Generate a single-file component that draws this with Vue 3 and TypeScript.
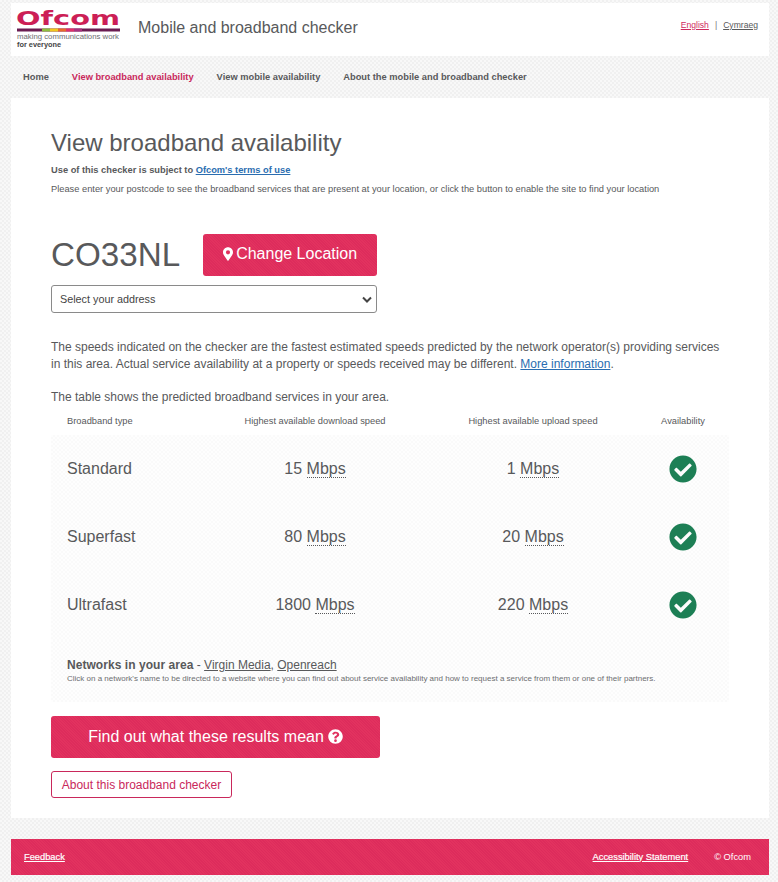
<script setup lang="ts">
const navItems = [
  { label: 'Home', active: false },
  { label: 'View broadband availability', active: true },
  { label: 'View mobile availability', active: false },
  { label: 'About the mobile and broadband checker', active: false },
]
const rows = [
  { type: 'Standard', down: '15', up: '1' },
  { type: 'Superfast', down: '80', up: '20' },
  { type: 'Ultrafast', down: '1800', up: '220' },
]
</script>

<template>
  <div class="page">
    <header class="header">
      <div class="brand">
        <svg class="logo" width="106" height="46" viewBox="0 0 106 46">
          <text class="logo-word" x="0" y="19" textLength="104" lengthAdjust="spacingAndGlyphs">Ofcom</text>
          <rect x="1" y="22.5" width="103" height="3" fill="#6b1d52" />
          <rect x="26" y="22.5" width="8" height="3" fill="#8fbf3f" />
          <rect x="34" y="22.5" width="8" height="3" fill="#f2c81e" />
          <rect x="42" y="22.5" width="8" height="3" fill="#e86a2c" />
          <rect x="50" y="22.5" width="8" height="3" fill="#e0306a" />
          <rect x="58" y="22.5" width="8" height="3" fill="#a8327f" />
          <text class="logo-tag" x="1" y="33" textLength="102" lengthAdjust="spacingAndGlyphs">making communications work</text>
          <text class="logo-for" x="1" y="41" textLength="44" lengthAdjust="spacingAndGlyphs">for everyone</text>
        </svg>
        <div class="site-title">Mobile and broadband checker</div>
      </div>
      <div class="lang">
        <a class="lang-active" href="#">English</a>
        <span class="lang-sep">|</span>
        <a href="#">Cymraeg</a>
      </div>
    </header>

    <nav class="nav">
      <a v-for="item in navItems" :key="item.label" href="#" :class="{ active: item.active }">{{ item.label }}</a>
    </nav>

    <main class="main">
      <h1>View broadband availability</h1>
      <p class="terms">Use of this checker is subject to <a href="#">Ofcom's terms of use</a></p>
      <p class="intro">Please enter your postcode to see the broadband services that are present at your location, or click the button to enable the site to find your location</p>

      <div class="location">
        <span class="postcode">CO33NL</span>
        <button class="change">
          <svg width="10" height="14" viewBox="0 0 384 512"><path fill="#fff" d="M172 502C27 291 0 269 0 192 0 86 86 0 192 0s192 86 192 192c0 77-27 99-172 310-9 14-31 14-40 0zm20-230a80 80 0 1 0 0-160 80 80 0 0 0 0 160z"/></svg>
          Change Location
        </button>
      </div>
      <div class="select">
        <span>Select your address</span>
        <svg width="10" height="7" viewBox="0 0 10 7"><path d="M1 1.5l4 4 4-4" fill="none" stroke="#444" stroke-width="2"/></svg>
      </div>

      <p class="body-text">The speeds indicated on the checker are the fastest estimated speeds predicted by the network operator(s) providing services in this area. Actual service availability at a property or speeds received may be different. <a href="#">More information</a>.</p>
      <p class="body-text table-lead">The table shows the predicted broadband services in your area.</p>

      <section class="results">
        <div class="row head">
          <div class="first">Broadband type</div>
          <div>Highest available download speed</div>
          <div>Highest available upload speed</div>
          <div>Availability</div>
        </div>
        <div v-for="r in rows" :key="r.type" class="row data">
          <div class="first">{{ r.type }}</div>
          <div>{{ r.down }} <abbr>Mbps</abbr></div>
          <div>{{ r.up }} <abbr>Mbps</abbr></div>
          <div class="check">
            <svg width="28" height="28" viewBox="0 0 512 512"><path fill="#1d7f55" d="M504 256c0 137-111 248-248 248S8 393 8 256 119 8 256 8s248 111 248 248zM227 387l184-184c6-6 6-16 0-22l-23-23c-6-6-16-6-22 0L216 308l-70-70c-6-6-16-6-22 0l-23 23c-6 6-6 16 0 22l104 104c6 6 16 6 22 0z"/></svg>
          </div>
        </div>
        <div class="networks">
          <div class="networks-line"><strong>Networks in your area</strong> - <a href="#">Virgin Media</a>, <a href="#">Openreach</a></div>
          <div class="networks-note">Click on a network's name to be directed to a website where you can find out about service availability and how to request a service from them or one of their partners.</div>
        </div>
      </section>

      <button class="find">
        Find out what these results mean
        <svg width="15" height="15" viewBox="0 0 512 512"><path fill="#fff" d="M504 256c0 137-111 248-248 248S8 393 8 256 119 8 256 8s248 111 248 248zM263 90c-54 0-89 23-116 63-4 5-3 12 2 16l35 26c5 4 13 3 17-2 18-23 31-36 58-36 22 0 48 14 48 34 0 16-13 24-34 36-24 14-57 31-57 75v6c0 7 5 12 12 12h56c7 0 12-5 12-12v-4c0-30 88-31 88-113 0-61-64-101-121-101zm-7 262a46 46 0 1 0 0 92 46 46 0 0 0 0-92z"/></svg>
      </button>
      <a class="about" href="#">About this broadband checker</a>
    </main>

    <footer class="footer">
      <a href="#">Feedback</a>
      <div class="footer-right">
        <a href="#">Accessibility Statement</a>
        <span>© Ofcom</span>
      </div>
    </footer>
  </div>
</template>

<style scoped>
.page {
  width: 778px;
  height: 882px;
  box-sizing: border-box;
  padding: 3px 9px 7px 11px;
  overflow: hidden;
  display: flex;
  flex-direction: column;
  font-family: "Liberation Sans", Arial, sans-serif;
  color: #58595b;
  background-color: #f5f5f5;
  background-image: conic-gradient(#f0f0f0 25%, #f8f8f8 0 50%, #f0f0f0 0 75%, #f8f8f8 0);
  background-size: 4px 4px;
}
a { color: inherit; }
.header {
  height: 53px;
  flex: none;
  background: #fff;
  display: flex;
  justify-content: space-between;
  padding: 0 11px 0 5px;
  box-sizing: border-box;
}
.brand { display: flex; align-items: flex-start; }
.logo { margin-top: 3px; flex: none; }
.logo-word { font-family: "DejaVu Sans", sans-serif; font-weight: 700; font-size: 20px; fill: #cc1f56; }
.logo-tag { font-size: 8px; fill: #6d6e71; }
.logo-for { font-size: 8px; font-weight: 700; fill: #444; }
.site-title { font-size: 16px; margin: 16px 0 0 16px; white-space: nowrap; }
.lang { font-size: 8.6px; margin-top: 17px; display: flex; gap: 6px; height: 11px; line-height: 11px; }
.lang-active { color: #cf2a5e; }
.lang-sep { color: #777; }
.nav {
  height: 42px;
  flex: none;
  display: flex;
  align-items: center;
  gap: 23px;
  padding-left: 12px;
  font-size: 9.3px;
  font-weight: 700;
}
.nav a { text-decoration: none; }
.nav a.active { color: #c9285b; }
.main {
  height: 720px;
  flex: none;
  box-sizing: border-box;
  background: #fff;
  padding: 30px 40px 0;
}
h1 { margin: 0; font-size: 24px; line-height: 30px; font-weight: 400; }
.terms { margin: 6px 0 0; font-size: 9.3px; line-height: 13px; font-weight: 700; }
.terms a { color: #2a6db0; }
.intro { margin: 6px 0 0; font-size: 9.3px; line-height: 13px; }
.location { margin-top: 38px; display: flex; align-items: center; gap: 23px; height: 42px; }
.postcode { font-size: 33.2px; line-height: 42px; }
.change {
  width: 174px;
  height: 42px;
  border: 0;
  border-radius: 3px;
  font: 16px "Liberation Sans", Arial, sans-serif;
  color: #fff;
  background-color: #e0305f;
  background-image: repeating-linear-gradient(45deg, #dd2c5c 0 1px, #e2325f 1px 2px);
  display: flex;
  align-items: center;
  justify-content: center;
  gap: 3px;
  padding: 0 0 3px;
}
.select {
  margin-top: 9px;
  width: 326px;
  height: 28px;
  box-sizing: border-box;
  border: 1px solid #8a8a8a;
  border-radius: 3px;
  padding: 0 4px 0 8px;
  display: flex;
  align-items: center;
  justify-content: space-between;
  font-size: 10.8px;
  color: #444;
}
.body-text { margin: 26px 0 0; font-size: 12px; line-height: 16.5px; }
.body-text a { color: #2a6db0; }
.table-lead { margin-top: 17px; }
.results { margin-top: 2px; }
.row {
  display: grid;
  grid-template-columns: 150px 228px 208px 92px;
  align-items: center;
  text-align: center;
}
.first { text-align: left; padding-left: 16px; }
.head { height: 27px; font-size: 9.3px; }
.data {
  height: 68.4px;
  font-size: 16px;
  background-color: #fcfcfc;
  background-image: conic-gradient(#fafafa 25%, #fefefe 0 50%, #fafafa 0 75%, #fefefe 0);
  background-size: 4px 4px;
}
abbr { border-bottom: 1px dotted #58595b; }
.check { display: flex; justify-content: center; }
.networks {
  height: 62px;
  box-sizing: border-box;
  padding: 18px 16px 0;
  background-color: #fcfcfc;
  background-image: conic-gradient(#fafafa 25%, #fefefe 0 50%, #fafafa 0 75%, #fefefe 0);
  background-size: 4px 4px;
}
.networks-line { font-size: 12px; line-height: 14px; }
.networks-line strong { letter-spacing: 0.05px; }
.networks-note { font-size: 8px; line-height: 11px; margin-top: 1px; color: #6d6e71; }
.find {
  margin-top: 14px;
  width: 329px;
  height: 42px;
  border: 0;
  border-radius: 3px;
  font: 16px "Liberation Sans", Arial, sans-serif;
  color: #fff;
  background-color: #e0305f;
  background-image: repeating-linear-gradient(45deg, #dd2c5c 0 1px, #e2325f 1px 2px);
  display: flex;
  align-items: center;
  justify-content: center;
  gap: 4px;
  padding: 0;
}
.about {
  margin-top: 13px;
  display: flex;
  align-items: center;
  justify-content: center;
  width: 181px;
  height: 27px;
  box-sizing: border-box;
  border: 1px solid #c9285b;
  border-radius: 3px;
  padding-top: 1px;
  font-size: 12px;
  color: #c9285b;
  text-decoration: none;
}
.footer {
  margin-top: 21px;
  height: 36px;
  flex: none;
  box-sizing: border-box;
  padding: 0 18px 1px 13px;
  display: flex;
  align-items: center;
  justify-content: space-between;
  font-size: 9.3px;
  color: #fff;
  background-color: #e0305f;
  background-image: repeating-linear-gradient(45deg, #dd2c5c 0 1px, #e2325f 1px 2px);
}
.footer a { -webkit-text-stroke: 0.2px #fff; }
.footer-right { display: flex; gap: 26px; }
</style>

<style>
html, body { margin: 0; padding: 0; }
</style>
